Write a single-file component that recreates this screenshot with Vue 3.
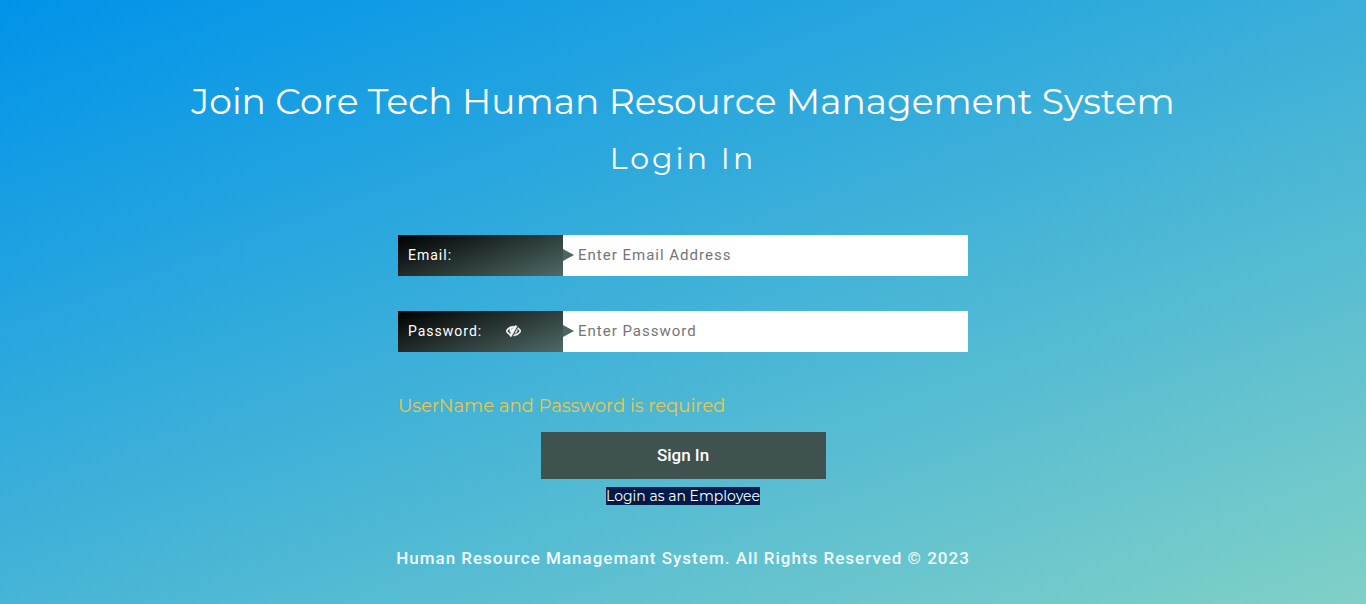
<script setup>
import { ref } from 'vue'

const email = ref('')
const password = ref('')
const visible = ref(false)
</script>

<template>
  <main class="page">
    <h1 class="title">Join Core Tech Human Resource Management System</h1>
    <h2 class="subtitle">Login In</h2>
    <form class="form" @submit.prevent>
      <div class="field">
        <label class="label" for="email">Email:</label>
        <input id="email" v-model="email" class="input" type="email" placeholder="Enter Email Address">
      </div>
      <div class="field">
        <div class="label">
          <label for="password">Password:</label>
          <button class="toggle" type="button" aria-label="Show password" @click="visible = !visible">
            <svg class="eye" viewBox="0 0 1792 1792" aria-hidden="true">
              <path fill="currentColor" stroke="currentColor" stroke-width="70" d="M555 1335l78-141q-87-63-136-159t-49-203q0-121 61-225-229 117-381 353 167 258 427 375zm389-759q0-20-14-34t-34-14q-125 0-214.500 89.500t-89.500 214.500q0 20 14 34t34 14 34-14 14-34q0-86 61-147t147-61q20 0 34-14t14-34zm363-191q0 7-1 9-105 188-315 566t-316 567l-49 89q-10 16-28 16-12 0-134-70-16-10-16-28 0-12 44-87-143-65-263.500-173t-208.500-245q-20-31-20-69t20-69q153-235 380-371t496-136q89 0 180 17l54-97q10-16 28-16 5 0 18 6t31 15.500 33 18.500 31.500 18.500 19.500 11.500q16 10 16 27zm37 447q0 139-79 253.500t-209 164.500l280-502q8 45 8 84zm448 128q0 35-20 69-39 64-109 145-150 172-347.500 267t-419.500 95l74-132q212-18 392.500-137t301.500-307q-115-179-282-294l63-112q95 64 182.500 153t144.500 184q20 34 20 69z" />
            </svg>
          </button>
        </div>
        <input id="password" v-model="password" class="input" :type="visible ? 'text' : 'password'" placeholder="Enter Password">
      </div>
      <p class="error" role="alert">UserName and Password is required</p>
      <button class="submit" type="submit">Sign In</button>
      <a class="employee" href="#">Login as an Employee</a>
    </form>
    <footer class="footer">Human Resource Managemant System. All Rights Reserved © 2023</footer>
  </main>
</template>

<style>
body {
  margin: 0;
}
</style>

<style scoped>
.page {
  box-sizing: border-box;
  min-height: 100vh;
  padding: 78px 16px 32px;
  display: flex;
  flex-direction: column;
  align-items: center;
  background: linear-gradient(160deg, #0093e9 0%, #80d0c7 100%);
  color: #fff;
  font-family: Montserrat, "Open Sans", sans-serif;
}
.title {
  margin: 0;
  font-size: 36px;
  line-height: 46px;
  font-weight: 400;
  text-align: center;
}
.subtitle {
  margin: 16px 0 0;
  font-size: 30px;
  line-height: 38px;
  font-weight: 400;
  letter-spacing: 3px;
}
.form {
  width: 100%;
  max-width: 570px;
  margin-top: 57px;
  display: flex;
  flex-direction: column;
  align-items: center;
}
.field {
  width: 100%;
  height: 41px;
  margin-bottom: 35px;
  display: flex;
  background: #fff;
  font-family: Roboto, sans-serif;
  letter-spacing: 1px;
}
.label {
  box-sizing: border-box;
  position: relative;
  width: 165px;
  padding: 0 10px 2px;
  display: flex;
  align-items: center;
  gap: 24px;
  background: linear-gradient(160deg, #000 0%, #4f6a67 100%);
  font-size: 14px;
  font-weight: 400;
}
.label::after {
  content: "";
  position: absolute;
  left: 100%;
  top: 14px;
  border: solid transparent;
  border-width: 6px 0 6px 11px;
  border-left-color: #4c6462;
}
.toggle {
  padding: 0;
  border: 0;
  background: none;
  color: #fff;
  display: flex;
}
.eye {
  width: 15px;
  height: 15px;
}
.input {
  flex: 1;
  min-width: 0;
  padding: 0 15px 2px;
  border: 0;
  outline: 0;
  background: transparent;
  color: #333;
  font: 15px Roboto, sans-serif;
  letter-spacing: 1px;
}
.input::placeholder {
  color: #757575;
}
.error {
  align-self: flex-start;
  margin: 7px 0 14px;
  color: #e9c64d;
  font-size: 18px;
  line-height: 24px;
}
.submit {
  width: 50%;
  height: 47px;
  padding: 0 6px 2px;
  border: 0;
  background: #3f524f;
  color: #fff;
  font: 500 17px Roboto, sans-serif;
}
.employee {
  margin-top: 8px;
  background: #001b4b;
  color: #fff;
  font-size: 14px;
  line-height: 18px;
  text-decoration: none;
}
.footer {
  margin-top: 41px;
  color: #f2fbfc;
  font: 500 17px/24px Roboto, sans-serif;
  letter-spacing: 1px;
  text-align: center;
}
</style>
